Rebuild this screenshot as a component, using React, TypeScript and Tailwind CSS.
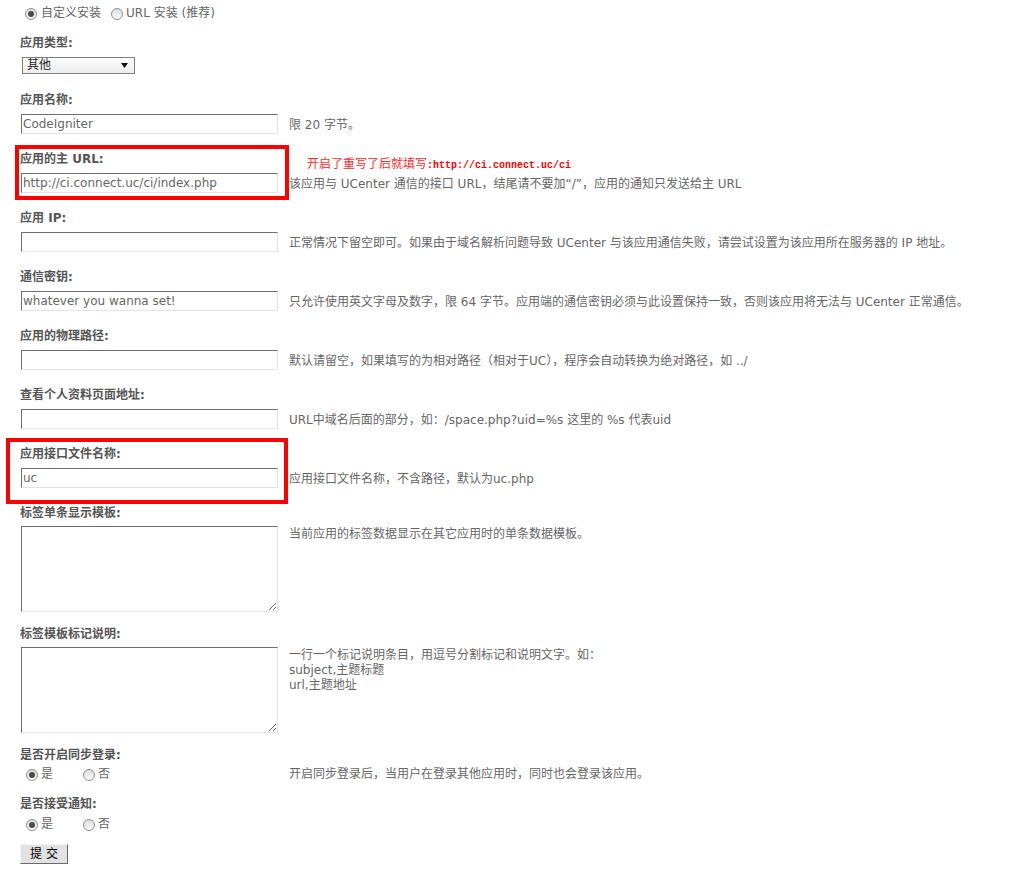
import React from "react";

const FONT = "font-['DejaVu_Sans','Noto_Sans_CJK_SC',sans-serif]";

function Radio({ checked }: { checked?: boolean }) {
  return (
    <span className="inline-flex h-3 w-3 shrink-0 items-center justify-center rounded-full border border-[#8f8f8f] bg-gradient-to-b from-[#dedede] to-[#f8f8f8]">
      {checked && <span className="h-[6px] w-[6px] rounded-full bg-[#4a4a4a]" />}
    </span>
  );
}

function TextInput({ value }: { value: string }) {
  return (
    <div className="ml-px flex h-5 w-[257px] items-center border border-t-[#6f6f6f] border-l-[#6f6f6f] border-r-[#e3e3e3] border-b-[#e3e3e3] bg-white pl-[1px] text-[12px] text-[#666]">
      {value}
    </div>
  );
}

function Label({ children }: { children: React.ReactNode }) {
  return <div className="flex h-5 w-[287px] shrink-0 items-center font-bold text-[#555]">{children}</div>;
}

type Field = { label: string; value: string; desc: string; note?: boolean };

const fields: Field[] = [
  { label: "应用名称:", value: "CodeIgniter", desc: "限 20 字节。" },
  {
    label: "应用的主 URL:",
    value: "http://ci.connect.uc/ci/index.php",
    desc: "该应用与 UCenter 通信的接口 URL，结尾请不要加“/”，应用的通知只发送给主 URL",
    note: true,
  },
  {
    label: "应用 IP:",
    value: "",
    desc: "正常情况下留空即可。如果由于域名解析问题导致 UCenter 与该应用通信失败，请尝试设置为该应用所在服务器的 IP 地址。",
  },
  {
    label: "通信密钥:",
    value: "whatever you wanna set!",
    desc: "只允许使用英文字母及数字，限 64 字节。应用端的通信密钥必须与此设置保持一致，否则该应用将无法与 UCenter 正常通信。",
  },
  {
    label: "应用的物理路径:",
    value: "",
    desc: "默认请留空，如果填写的为相对路径（相对于UC），程序会自动转换为绝对路径，如 ../",
  },
  {
    label: "查看个人资料页面地址:",
    value: "",
    desc: "URL中域名后面的部分，如：/space.php?uid=%s 这里的 %s 代表uid",
  },
  { label: "应用接口文件名称:", value: "uc", desc: "应用接口文件名称，不含路径，默认为uc.php" },
];

function InputField({ f }: { f: Field }) {
  return (
    <div className="pb-[15px]">
      <div className="flex h-5">
        <Label>{f.label}</Label>
        {f.note && (
          <div className="h-5 whitespace-nowrap pt-[9px] leading-[12px] text-[#ff0000]">
            <span className="text-[12px] leading-[12px] text-[#ff2a2a]">开启了重写了后就填写</span>
            <span className="font-['Liberation_Mono',monospace] text-[10px] font-bold leading-[12px]">
              :http://ci.connect.uc/ci
            </span>
          </div>
        )}
      </div>
      <div className="mt-1 flex items-start">
        <div className="w-[269px] shrink-0">
          <TextInput value={f.value} />
        </div>
        <div className="whitespace-nowrap pt-[4px] leading-[15px]">{f.desc}</div>
      </div>
    </div>
  );
}

function AreaField({ label, desc }: { label: string; desc: React.ReactNode }) {
  return (
    <div className="pb-[12px]">
      <Label>{label}</Label>
      <div className="mt-[3px] flex items-start">
        <div className="w-[269px] shrink-0">
          <textarea
            className="ml-px block h-[86px] w-[257px] resize-y border border-t-[#6f6f6f] border-l-[#6f6f6f] border-r-[#e3e3e3] border-b-[#e3e3e3] bg-white outline-none"
            defaultValue=""
          />
        </div>
        <div className="whitespace-nowrap pt-px leading-[15px]">{desc}</div>
      </div>
    </div>
  );
}

function YesNo() {
  return (
    <div className="flex h-[15px] w-[269px] shrink-0 items-center">
      <div className="ml-[6px] flex w-[57px] items-center gap-[3px]">
        <Radio checked />
        <span>是</span>
      </div>
      <div className="flex items-center gap-[3px]">
        <Radio />
        <span>否</span>
      </div>
    </div>
  );
}

export default function App() {
  return (
    <div
      className={`relative min-h-[885px] w-full bg-white pl-5 pt-[6px] text-[12px] leading-[15px] text-[#666] ${FONT}`}
    >
      {/* install mode */}
      <div className="flex h-[15px] items-center">
        <div className="ml-[5px] flex items-center gap-[4px]">
          <Radio checked />
          <span>自定义安装</span>
        </div>
        <div className="ml-[10px] flex items-center gap-[3px]">
          <Radio />
          <span>URL 安装 (推荐)</span>
        </div>
      </div>

      {/* app type */}
      <div className="mt-[12px] pb-[16px]">
        <Label>应用类型:</Label>
        <div className="ml-[2px] mt-1 flex h-[17px] w-[113px] items-center justify-between border border-[#7f7f7f] bg-gradient-to-b from-[#ffffff] to-[#ececec] pl-[4px] pr-[6px] text-[#222]">
          <span>其他</span>
          <svg width="7" height="5" viewBox="0 0 7 5">
            <path d="M0 0 H7 L3.5 5 Z" fill="#111" />
          </svg>
        </div>
      </div>

      {fields.map((f) => (
        <InputField key={f.label} f={f} />
      ))}

      <AreaField label="标签单条显示模板:" desc="当前应用的标签数据显示在其它应用时的单条数据模板。" />
      <AreaField
        label="标签模板标记说明:"
        desc={
          <>
            <div>一行一个标记说明条目，用逗号分割标记和说明文字。如：</div>
            <div>subject,主题标题</div>
            <div>url,主题地址</div>
          </>
        }
      />

      <div className="pb-[12px]">
        <Label>是否开启同步登录:</Label>
        <div className="mt-[2px] flex items-center">
          <YesNo />
          <div className="whitespace-nowrap">开启同步登录后，当用户在登录其他应用时，同时也会登录该应用。</div>
        </div>
      </div>

      <div>
        <Label>是否接受通知:</Label>
        <div className="mt-[3px] flex items-center">
          <YesNo />
        </div>
      </div>

      <button className="mt-[12px] flex h-5 w-12 items-center justify-center border border-t-[#f4f4f4] border-l-[#f4f4f4] border-r-[#6a6a6a] border-b-[#6a6a6a] bg-[#e2e2e2] text-[12px] text-black">
        提 交
      </button>

      {/* highlight frames */}
      <div className="pointer-events-none absolute left-[15px] top-[145px] h-[55px] w-[274px] border-4 border-[#ff0000]" />
      <div className="pointer-events-none absolute left-[6px] top-[438px] h-[66px] w-[282px] border-4 border-[#ff0000]" />
    </div>
  );
}
